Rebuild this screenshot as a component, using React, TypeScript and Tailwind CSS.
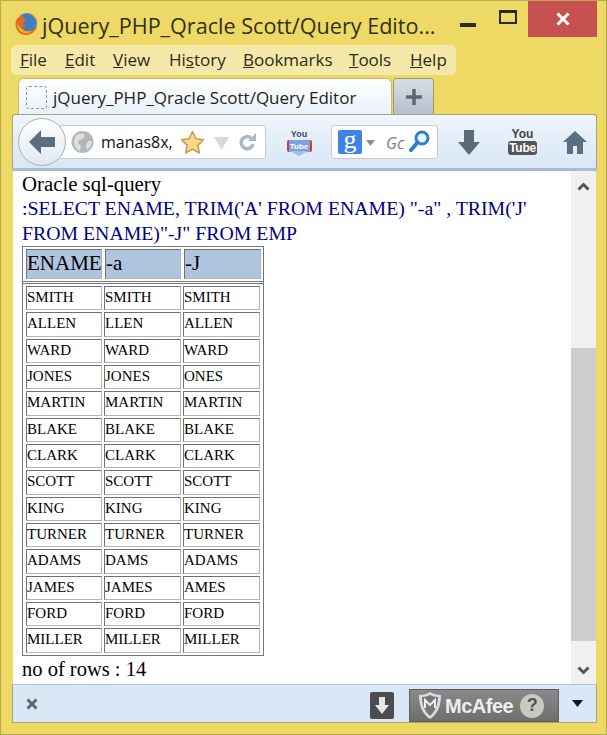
import React from "react";

const names = ["SMITH", "ALLEN", "WARD", "JONES", "MARTIN", "BLAKE", "CLARK", "SCOTT", "KING", "TURNER", "ADAMS", "JAMES", "FORD", "MILLER"];
const trimA = ["SMITH", "LLEN", "WARD", "JONES", "MARTIN", "BLAKE", "CLARK", "SCOTT", "KING", "TURNER", "DAMS", "JAMES", "FORD", "MILLER"];
const trimJ = ["SMITH", "ALLEN", "WARD", "ONES", "MARTIN", "BLAKE", "CLARK", "SCOTT", "KING", "TURNER", "ADAMS", "AMES", "FORD", "MILLER"];

function Cell({ text }: { text: string }) {
  return (
    <div className="border border-t-[#707070] border-l-[#707070] border-r-[#b4b4b4] border-b-[#b4b4b4] text-[15px] leading-[20px] text-black">
      {text}
    </div>
  );
}

function HeadCell({ text }: { text: string }) {
  return (
    <div className="h-[30px] border border-t-[#707070] border-l-[#707070] border-r-[#b4b4b4] border-b-[#b4b4b4] bg-[#b0c4de] text-[21px] leading-[27px] text-black">
      {text}
    </div>
  );
}

export default function App() {
  return (
    <div className="relative h-[735px] w-[607px] overflow-hidden border border-[#b9a94f] bg-[#edd964] font-[Open_Sans,sans-serif]">
      {/* title bar */}
      <svg className="absolute left-[13px] top-[10px]" width="24" height="25" viewBox="0 0 24 25">
        <circle cx="13" cy="12" r="10" fill="#3f7fc6" />
        <path d="M7 3c-1 1-1 2-1 3C4 6 3 7 2 10c-2 6 2 14 10 14 6 0 11-5 11-10-1 3-4 6-8 6-4 0-7-2-7-5 1 1 3 1 4 0l-3-2c0-2 2-3 3-5-2-1-4-2-5-5z" fill="#e56c1f" />
        <path d="M14 2c4 0 8 3 9 8 0-2-2-3-3-3 0-2-3-4-6-5z" fill="#f0a030" />
        <path d="M3 12c0 5 3 10 9 10 3 0 5-1 7-3-3 2-7 2-10 0-3-2-5-4-6-7z" fill="#f6b62c" />
      </svg>
      <div className="absolute left-[41px] top-[8px] whitespace-nowrap text-[21.600px] leading-[34px] text-[#33301a]">
        jQuery_PHP_Qracle Scott/Query Edito...
      </div>
      <div className="absolute left-[459px] top-[22px] h-[4px] w-[16px] bg-[#2a2a1f]" />
      <div className="absolute left-[498px] top-[9px] h-[14px] w-[18px] border-2 border-t-[3px] border-[#2a2a1f]" />
      <div className="absolute left-[527px] top-0 flex h-[36px] w-[69px] items-center justify-center bg-[#c75050]">
        <svg width="14" height="14" viewBox="0 0 14 14">
          <path d="M1.500 1.500l11 11M12.500 1.500l-11 11" stroke="#fff" strokeWidth="3" />
        </svg>
      </div>

      {/* menu */}
      <div className="absolute left-[10px] top-[44px] h-[30px] w-[445px] rounded-md bg-[#f4e9a8] text-[17px] leading-[30px] text-[#2b2b20]">
        <span className="absolute left-[9px]"><span className="underline">F</span>ile</span>
        <span className="absolute left-[54px]"><span className="underline">E</span>dit</span>
        <span className="absolute left-[102px]"><span className="underline">V</span>iew</span>
        <span className="absolute left-[158px]">Hi<span className="underline">s</span>tory</span>
        <span className="absolute left-[232px]"><span className="underline">B</span>ookmarks</span>
        <span className="absolute left-[338px]"><span className="underline">T</span>ools</span>
        <span className="absolute left-[399px]"><span className="underline">H</span>elp</span>
      </div>

      {/* tabs */}
      <div className="absolute left-[17px] top-[77px] flex h-[38px] w-[374px] items-center gap-[6px] rounded-t-md border border-b-0 border-[#c9bc72] bg-gradient-to-b from-white to-[#e8f0fa] pl-[7px] text-[17px] text-[#222]">
        <div className="h-[23px] w-[21px] rounded-[3px] border border-dashed border-[#8a93a0]" />
        <span className="whitespace-nowrap">jQuery_PHP_Qracle Scott/Query Editor</span>
      </div>
      <div className="absolute left-[392px] top-[77px] flex h-[37px] w-[41px] items-center justify-center rounded-t-[3px] border border-[#9a9a70] bg-gradient-to-b from-[#d8dee4] to-[#b4c0cc]">
        <svg width="16" height="16" viewBox="0 0 16 16">
          <path d="M8 0v16M0 8h16" stroke="#5a6670" strokeWidth="3.500" />
        </svg>
      </div>

      {/* toolbar */}
      <div className="absolute left-[11px] top-[113px] h-[55px] w-[585px] rounded-t-[3px] border border-b-0 border-[#a9a47a] bg-gradient-to-b from-[#eff5fc] to-[#d8e6f5]" />
      <div className="absolute left-[11px] top-[167px] h-[3px] w-[585px] bg-[#a9bdd2]" />
      <div className="absolute left-[57px] top-[124px] flex h-[34px] w-[208px] items-center rounded-[3px] border border-[#c4cdd6] bg-white pl-[42px] text-[16px] text-[#111]">
        manas8x,
      </div>
      <div className="absolute left-[17px] top-[117px] flex h-[48px] w-[48px] items-center justify-center rounded-full border border-[#a8b0b8] bg-gradient-to-b from-white to-[#dfe8f1]">
        <svg width="28" height="26" viewBox="0 0 28 26">
          <path d="M13 1l-12 12 12 12v-7h14v-10h-14z" fill="#5c6f80" />
        </svg>
      </div>
      <svg className="absolute left-[70px] top-[129px]" width="23" height="24" viewBox="0 0 23 24">
        <circle cx="11.500" cy="12" r="11" fill="#b4b6b8" />
        <path d="M6 5c3-2 6-2 8 0l-2 4-4 1-1 3 3 3-1 5c-3-1-6-5-6-9 0-3 1-5 3-7zM17 11l4 0c0 4-2 7-5 9l-1-4z" fill="#dcdedf" />
      </svg>
      <svg className="absolute left-[179px] top-[129px]" width="25" height="25" viewBox="0 0 25 25">
        <path d="M12.500 1.500l3.400 7.200 7.600 1-5.600 5.400 1.500 7.900-6.900-3.900-6.900 3.900 1.500-7.900-5.600-5.400 7.600-1z" fill="#f7d98a" stroke="#c99a4c" strokeWidth="1.500" strokeLinejoin="round" />
      </svg>
      <svg className="absolute left-[213px] top-[136px]" width="15" height="13" viewBox="0 0 15 13">
        <path d="M0 0h15l-7.500 13z" fill="#d3dae0" />
      </svg>
      <svg className="absolute left-[237px] top-[132px]" width="19" height="19" viewBox="0 0 19 19">
        <path d="M15 11a6 6 0 1 1-2-6" fill="none" stroke="#a9b8c4" strokeWidth="3.500" />
        <path d="M10 8h8v-8z" fill="#a9b8c4" />
      </svg>
      <div className="absolute left-[284px] top-[128px] flex w-[28px] flex-col items-center font-[Liberation_Sans,sans-serif] font-bold">
        <span className="text-[9px] leading-[11px] text-[#39466b]">You</span>
        <div className="flex h-[12px] w-[25px] items-center justify-center rounded-[2px] border-x-2 border-[#d8383a] bg-[#7f9fe0] text-[8px] leading-[11px] text-white">Tube</div>
        <svg className="-mt-px" width="18" height="5" viewBox="0 0 18 5">
          <path d="M0 0h18l-9 5z" fill="#9ebde8" />
        </svg>
      </div>
      <div className="absolute left-[330px] top-[124px] h-[34px] w-[107px] rounded-[3px] border border-[#c4cdd6] bg-white" />
      <div className="absolute left-[337px] top-[129px] flex h-[24px] w-[24px] items-center justify-center rounded-[2px] bg-[#3f83e8] pb-[5px] font-[Liberation_Serif,serif] text-[26px] leading-[22px] text-white">
        g
      </div>
      <svg className="absolute left-[365px] top-[139px]" width="9" height="6" viewBox="0 0 9 6">
        <path d="M0 0h9l-4.500 6z" fill="#8a8f94" />
      </svg>
      <div className="absolute left-[385px] top-[130px] text-[16px] italic leading-[24px] text-[#7c7c7c]">Gc</div>
      <svg className="absolute left-[408px] top-[129px]" width="21" height="22" viewBox="0 0 21 22">
        <circle cx="13" cy="8" r="6" fill="#eaf3fc" stroke="#2f7fc8" strokeWidth="3" />
        <path d="M8.500 12.500L2 20" stroke="#2f7fc8" strokeWidth="4" strokeLinecap="round" />
      </svg>
      <svg className="absolute left-[457px] top-[129px]" width="22" height="25" viewBox="0 0 22 25">
        <path d="M6 0h10v12h6l-11 13L0 12h6z" fill="#5c6b78" />
      </svg>
      <div className="absolute left-[508px] top-[126px] flex w-[27px] flex-col items-center font-[Liberation_Sans,sans-serif] font-bold text-[#444]">
        <span className="text-[12px] leading-[14px]">You</span>
        <span className="rounded-[3px] bg-[#555] px-[1px] text-[12px] leading-[14px] tracking-[-0.3px] text-white">Tube</span>
      </div>
      <svg className="absolute left-[562px] top-[130px]" width="24" height="23" viewBox="0 0 24 23">
        <path d="M12 0L0 11h4v12h6v-8h4v8h6V11h4z" fill="#5c6f80" />
      </svg>

      {/* page */}
      <div className="absolute left-[12px] top-[170px] h-[513px] w-[583px] bg-white font-[Liberation_Serif,serif]">
        <div className="pl-[9px] leading-[25px] text-black">
          <div className="text-[20.800px]">Oracle sql-query</div>
          <div className="w-[530px] text-[19.800px] text-[#000080]">:SELECT ENAME, TRIM('A' FROM ENAME) "-a" , TRIM('J' FROM ENAME)"-J" FROM EMP</div>
        </div>
        <div className="absolute left-[9px] top-[75px] w-[242px] border border-[#777]">
          <div className="grid h-[35px] grid-cols-[76px_76px_77px] gap-[3px] border-b border-[#777] pl-[3px] pt-[2px]">
            <HeadCell text="ENAME" />
            <HeadCell text="-a" />
            <HeadCell text="-J" />
          </div>
          <div className="mt-px grid grid-cols-[76px_77px_77px] auto-rows-[24.350px] gap-[2px] border-t border-[#777] pb-[2px] pl-[3px] pt-[2px]">
            {names.map((n, i) => (
              <React.Fragment key={i}>
                <Cell text={n} />
                <Cell text={trimA[i]} />
                <Cell text={trimJ[i]} />
              </React.Fragment>
            ))}
          </div>
        </div>
        <div className="absolute left-[9px] top-[486px] text-[20.500px] leading-[25px] text-black">no of rows : 14</div>

        {/* scrollbar */}
        <div className="absolute right-0 top-0 h-[513px] w-[25px] bg-[#f0f0f0]">
          <svg className="absolute left-[6px] top-[11px]" width="13" height="9" viewBox="0 0 13 9">
            <path d="M1.500 7.500l5-5 5 5" fill="none" stroke="#555" strokeWidth="3" />
          </svg>
          <svg className="absolute left-[6px] top-[495px]" width="13" height="9" viewBox="0 0 13 9">
            <path d="M1.500 1.500l5 5 5-5" fill="none" stroke="#555" strokeWidth="3" />
          </svg>
          <div className="absolute left-0 top-[177px] h-[293px] w-[25px] bg-[#cdcdcd]" />
        </div>
      </div>

      {/* status bar */}
      <div className="absolute left-[11px] top-[683px] h-[39px] w-[585px] border-x border-b border-t border-[#a9a47a] border-t-[#b4c4d4] bg-[#d9e8f7]" />
      <svg className="absolute left-[25px] top-[697px]" width="12" height="12" viewBox="0 0 12 12">
        <path d="M1.500 1.500l9 9M10.500 1.500l-9 9" stroke="#666" strokeWidth="3" />
      </svg>
      <div className="absolute left-[369px] top-[691px] flex h-[27px] w-[24px] items-center justify-center rounded-[2px] bg-[#4d4d4d]">
        <svg width="14" height="17" viewBox="0 0 14 17">
          <path d="M4 0h6v8h4l-7 9-7-9h4z" fill="#e6e6e6" />
        </svg>
      </div>
      <div className="absolute left-[408px] top-[688px] flex h-[33px] w-[150px] items-center border border-[#5e5e5e] bg-gradient-to-b from-[#8a8a8a] to-[#6e6e6e] pl-[8px] font-[Liberation_Sans,sans-serif]">
        <svg width="24" height="27" viewBox="0 0 24 27">
          <path d="M1 3c4 0 8-1 11-3 3 2 7 3 11 3 0 10-3 19-11 24C4 22 1 13 1 3z" fill="#dcdcdc" />
          <path d="M4 5c3 0 6-1 8-2 2 1 5 2 8 2 0 8-3 15-8 19C7 20 4 13 4 5z" fill="#777" />
          <path d="M7 16V8l5 5 5-5v8" fill="none" stroke="#eee" strokeWidth="2" />
        </svg>
        <span className="ml-[3px] text-[20px] font-bold tracking-[-0.5px] text-[#eeeeee]">McAfee</span>
        <div className="ml-[7px] flex h-[24px] w-[24px] items-center justify-center rounded-full bg-[#c9c9c0] text-[18px] font-bold text-[#555]">?</div>
      </div>
      <svg className="absolute left-[571px] top-[699px]" width="11" height="7" viewBox="0 0 11 7">
        <path d="M0 0h11l-5.500 7z" fill="#111" />
      </svg>
    </div>
  );
}
